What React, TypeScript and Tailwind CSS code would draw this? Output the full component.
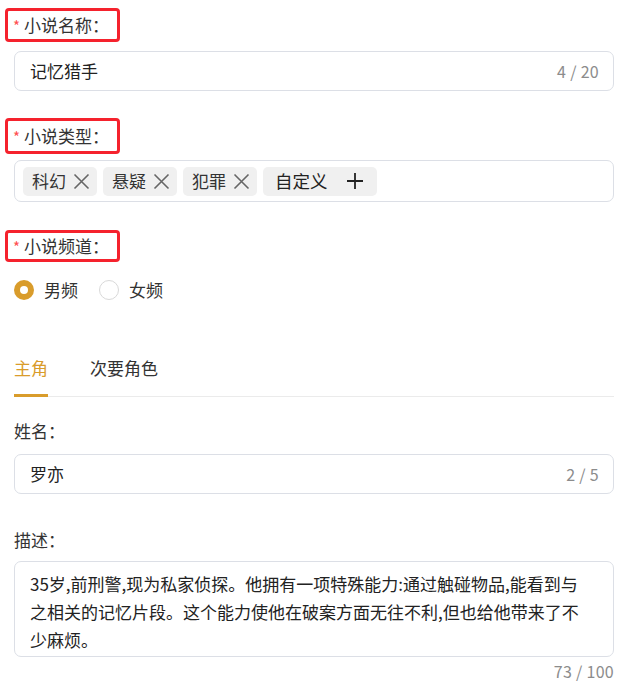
import { useState } from "react";

const FONT = { fontFamily: '"Noto Sans CJK SC", "Noto Sans", sans-serif' };

function ReqLabel({ text, className = "" }: { text: string; className?: string }) {
  return (
    <div className={`-ml-[9px] inline-flex items-center border-[3px] border-[#f5222d] rounded-[4px] pl-[5px] pr-[8px] ${className}`}>
      <span className="text-[15px] leading-[24px] text-[#ff4d4f] mr-[4px] mt-[2px]">*</span>
      <span className="text-[17px] leading-[24px] text-[#333]">{text}：</span>
    </div>
  );
}

function XIcon() {
  return (
    <svg width="17" height="17" viewBox="0 0 17 17" className="ml-[7px]">
      <path d="M1.5 1.5 L15.5 15.5 M15.5 1.5 L1.5 15.5" stroke="#666" strokeWidth="1.6" fill="none" />
    </svg>
  );
}

function PlusIcon() {
  return (
    <svg width="18" height="18" viewBox="0 0 18 18" className="ml-[18px]">
      <path d="M9 1 V17 M1 9 H17" stroke="#222" strokeWidth="1.8" fill="none" />
    </svg>
  );
}

function Radio({ checked, label, onClick, className = "" }: { checked: boolean; label: string; onClick: () => void; className?: string }) {
  return (
    <button onClick={onClick} className={`flex items-center ${className}`}>
      <span
        className={`w-[20px] h-[20px] rounded-full flex items-center justify-center ${
          checked ? "bg-[#d99c2b]" : "border border-[#d9d9d9]"
        }`}
      >
        {checked && <span className="w-[8px] h-[8px] rounded-full bg-white" />}
      </span>
      <span className="ml-[10px]">{label}</span>
    </button>
  );
}

export default function App() {
  const [channel, setChannel] = useState("male");
  const [tab, setTab] = useState("main");
  const tags = ["科幻", "悬疑", "犯罪"];

  return (
    <div className="w-[634px] h-[682px] bg-white pl-[14px] pr-[20px] pt-[8px] overflow-hidden" style={FONT}>
      {/* 小说名称 */}
      <ReqLabel text="小说名称" className="h-[34px]" />
      <div className="mt-[9px] h-[40px] border border-[#dcdfe6] rounded-[7px] flex items-center justify-between pl-[15px] pr-[14px] leading-[24px]">
        <span className="text-[17px] text-[#222]">记忆猎手</span>
        <span className="text-[16px] text-[#8c8c8c] tracking-[0.3px]">4 / 20</span>
      </div>

      {/* 小说类型 */}
      <ReqLabel text="小说类型" className="h-[36px] mt-[27px]" />
      <div className="mt-[6px] h-[42px] border border-[#dcdfe6] rounded-[7px] flex items-center gap-[6px] pl-[8px] leading-[24px]">
        {tags.map((t) => (
          <div key={t} className="h-[29px] bg-[#f0f0f0] rounded-[5px] flex items-center pl-[9px] pr-[7px] text-[17px] text-[#333]">
            {t}
            <XIcon />
          </div>
        ))}
        <div className="h-[29px] bg-[#f0f0f0] rounded-[5px] flex items-center pl-[12px] pr-[13px] text-[17.5px] text-[#222]">
          自定义
          <PlusIcon />
        </div>
      </div>

      {/* 小说频道 */}
      <ReqLabel text="小说频道" className="h-[32px] mt-[28px]" />
      <div className="mt-[16px] flex items-center text-[17px] leading-[24px] text-[#333]">
        <Radio checked={channel === "male"} label="男频" onClick={() => setChannel("male")} />
        <Radio checked={channel === "female"} label="女频" onClick={() => setChannel("female")} className="ml-[21px]" />
      </div>

      {/* Tabs */}
      <div className="mt-[54px] flex border-b border-[#ebebeb] text-[17px] leading-[24px]">
        <button
          onClick={() => setTab("main")}
          className={`pb-[14px] border-b-[3px] -mb-px ${
            tab === "main" ? "text-[#d99c2b] border-[#d99c2b]" : "text-[#333] border-transparent"
          }`}
        >
          主角
        </button>
        <button
          onClick={() => setTab("side")}
          className={`ml-[42px] pb-[14px] border-b-[3px] -mb-px ${
            tab === "side" ? "text-[#d99c2b] border-[#d99c2b]" : "text-[#333] border-transparent"
          }`}
        >
          次要角色
        </button>
      </div>

      <div className="mt-[22px] text-[17px] text-[#333] leading-[24px]">姓名：</div>
      <div className="mt-[11px] h-[40px] border border-[#dcdfe6] rounded-[7px] flex items-center justify-between pl-[15px] pr-[14px] leading-[24px]">
        <span className="text-[17px] text-[#222]">罗亦</span>
        <span className="text-[16px] text-[#8c8c8c] tracking-[0.3px]">2 / 5</span>
      </div>

      <div className="mt-[34px] text-[17px] text-[#333] leading-[24px]">描述：</div>
      <div className="mt-[9px] h-[96px] border border-[#dcdfe6] rounded-[7px] pl-[15px] pr-[12px] pt-[8px] text-[17px] leading-[28px] text-[#222] whitespace-nowrap">
        <div>35岁,前刑警,现为私家侦探。他拥有一项特殊能力:通过触碰物品,能看到与</div>
        <div>之相关的记忆片段。这个能力使他在破案方面无往不利,但也给他带来了不</div>
        <div>少麻烦。</div>
      </div>
      <div className="text-right text-[16px] text-[#8c8c8c] mt-[2px] leading-[24px] tracking-[0.3px]">73 / 100</div>
    </div>
  );
}
